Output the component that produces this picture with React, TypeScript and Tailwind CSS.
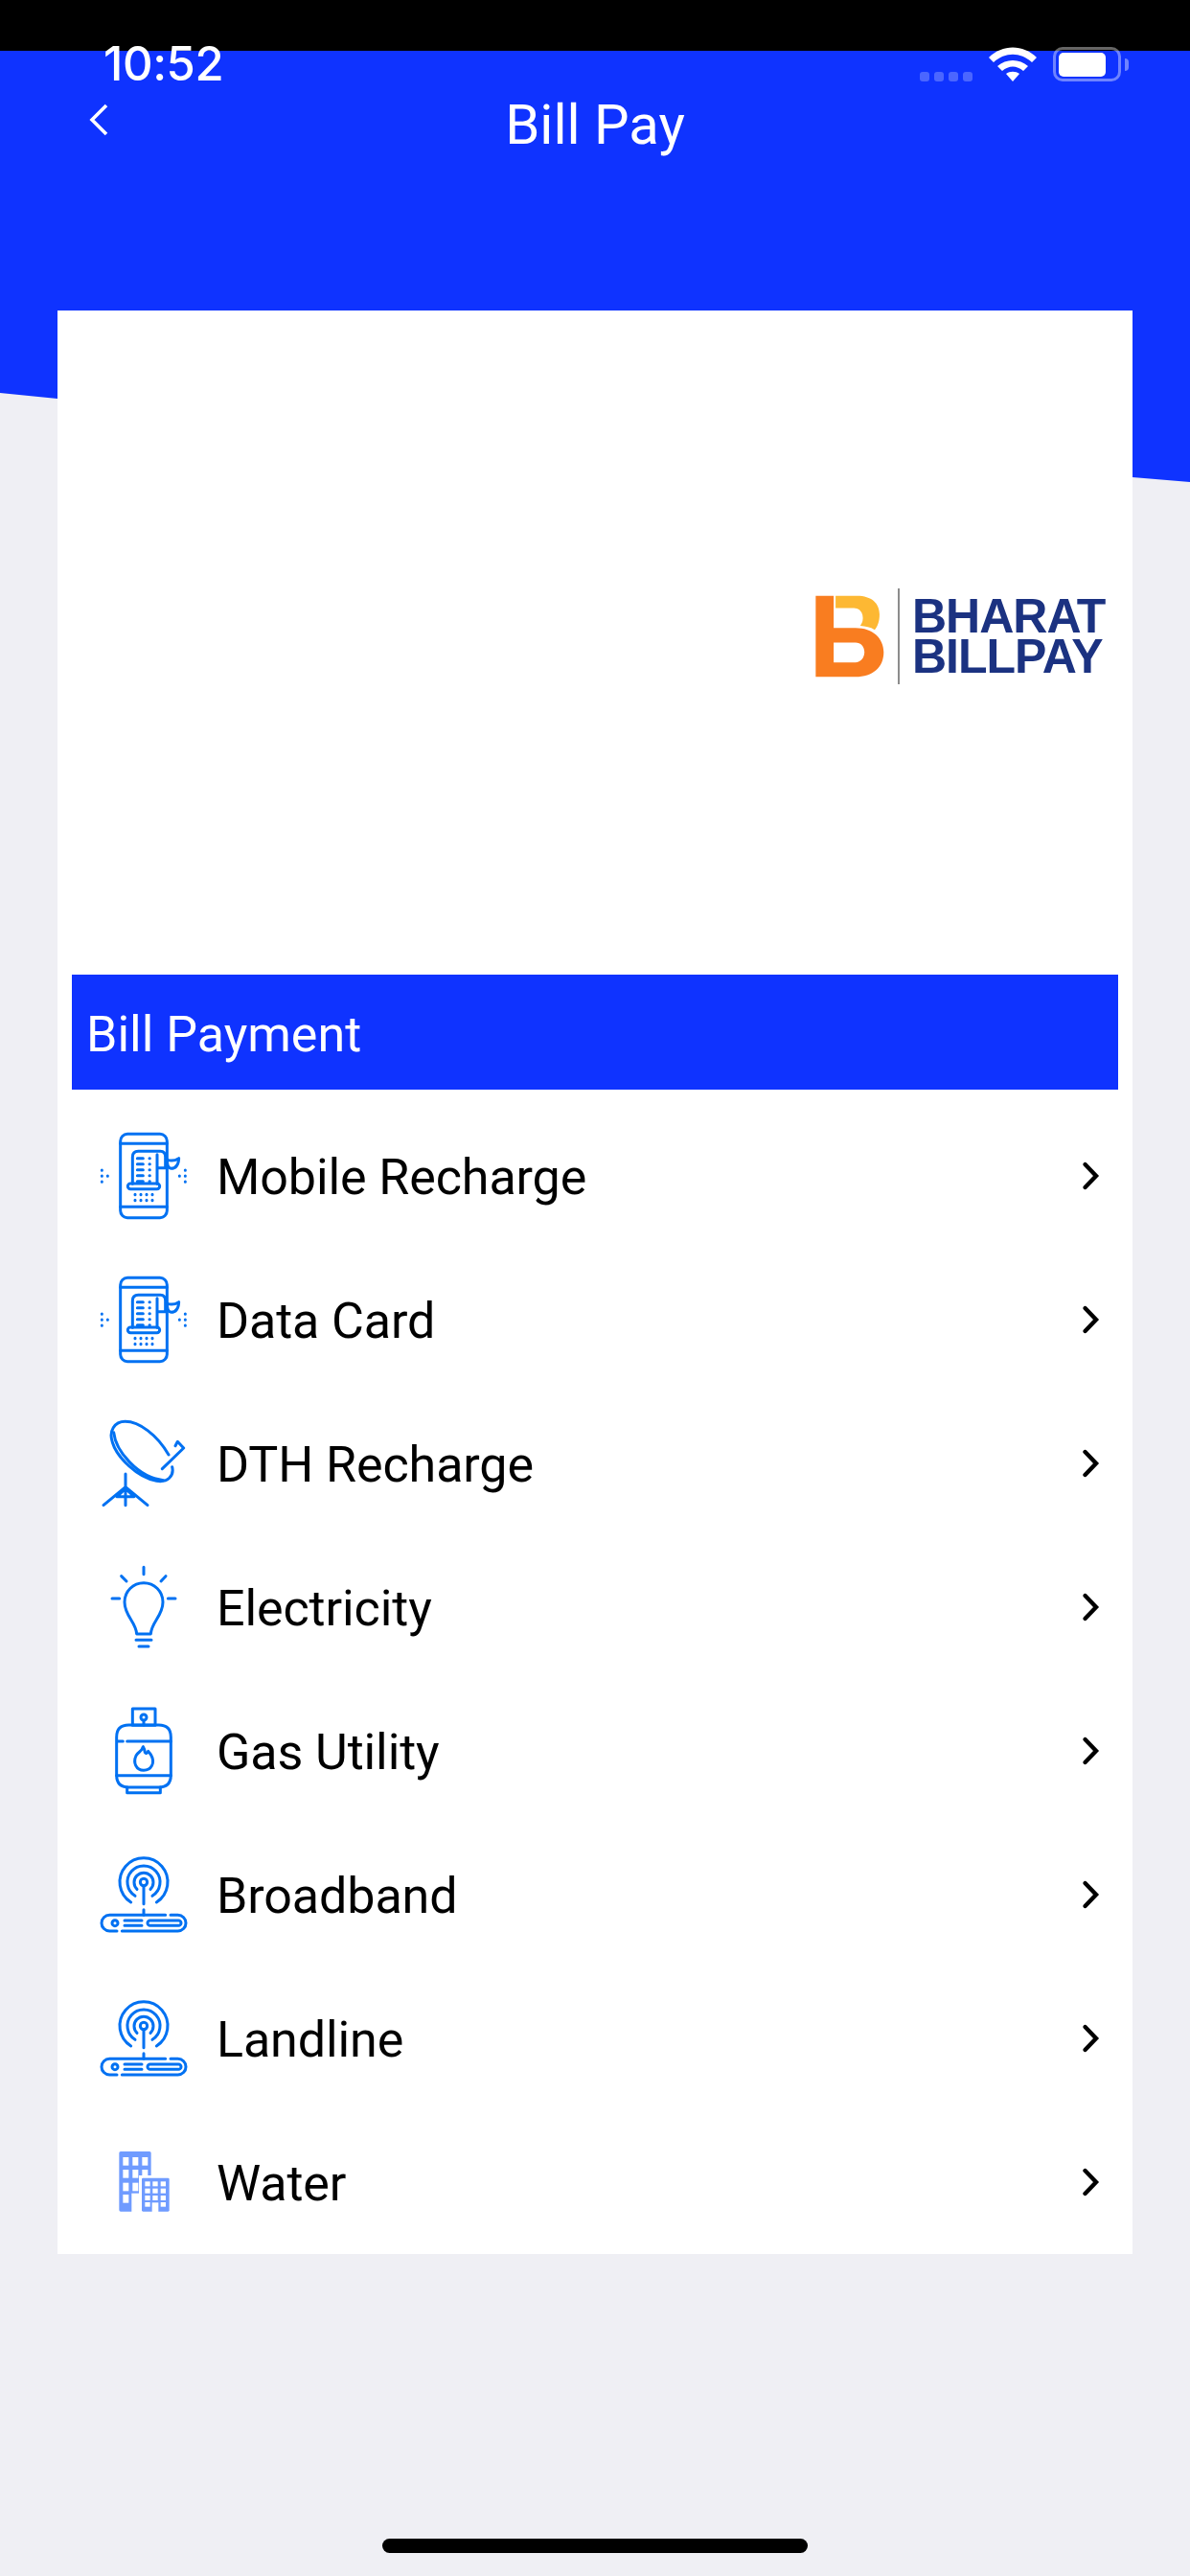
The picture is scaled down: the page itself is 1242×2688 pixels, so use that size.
const BLUE = "#0071f2";

function Chevron() {
  return (
    <svg width="24" height="32" viewBox="0 0 24 32" fill="none" stroke="#000" strokeWidth="4.4" strokeLinecap="round" strokeLinejoin="miter">
      <path d="M4.5 4 L16 16 L4.5 28" />
    </svg>
  );
}

function IconFrame({ box, children }: { box: string; children: React.ReactNode }) {
  return (
    <svg width="96" height="96" viewBox={box} fill="none" stroke={BLUE} strokeWidth="9" strokeLinecap="round" strokeLinejoin="round">
      {children}
    </svg>
  );
}

function PhoneIcon() {
  const lines = [146, 164, 182, 200, 218];
  const keyX = [183, 201, 219, 237];
  return (
    <IconFrame box="66 57 288 288">
      <rect x="137" y="70" width="146" height="262" rx="22" />
      <path d="M137 100 H283 M137 298 H283" />
      <path d="M175 226 V142 Q175 124 193 124 H262 Q278 124 278 142 V176 H252 M252 134 V226" />
      <path d="M283 150 Q300 158 320 146 Q318 178 296 178 Q283 176 283 150" />
      <rect x="160" y="225" width="100" height="17" rx="8.5" />
      {lines.map((y) => (
        <path key={y} d={`M190 ${y} H208 M228 ${y} H229`} />
      ))}
      {keyX.map((x) => (
        <path key={x} d={`M${x} 259 V260 M${x} 277 V278`} />
      ))}
      <path d="M79 183 V184 M79 201 V202 M79 219 V220 M97 201 V202 M340 183 V184 M340 201 V202 M340 219 V220 M322 201 V202" />
    </IconFrame>
  );
}

function DishIcon() {
  return (
    <IconFrame box="66 87 288 288">
      <path d="M288 204 C252 142 196 100 152 100 C118 100 100 130 112 165 C126 212 190 275 250 286 C285 292 306 270 299 242" />
      <path d="M116 134 C122 192 192 276 272 284" />
      <path d="M268 248 L335 183 L316 163 L309 176" />
      <path d="M153 264 V362 M84 362 L153 305 L222 362 M126 335 L153 310 L180 335 Z" />
    </IconFrame>
  );
}

function BulbIcon() {
  return (
    <IconFrame box="66 537 288 288">
      <path d="M210 556 V578 M140 584 L156 600 M279 584 L264 600 M111 654 H134 M286 654 H309" />
      <path d="M188 765 C186 728 150 708 150 665 A60 60 0 0 1 270 665 C270 708 234 728 232 765 Z" />
      <path d="M186 784 H234 M195 804 H225" />
    </IconFrame>
  );
}

function GasIcon() {
  return (
    <IconFrame box="66 87 288 288">
      <rect x="175" y="99" width="71" height="52" />
      <circle cx="210" cy="126" r="9" />
      <path d="M210 135 V150" />
      <path d="M145 201 H125 V188 Q125 150 163 150 H257 Q295 150 295 188 V307 Q295 345 257 345 H163 Q125 345 125 307 V188" />
      <path d="M158 201 H295 M125 308 H295" />
      <path d="M158 345 V362 H262 V345" />
      <path d="M208 218 C204 234 194 232 186 246 C176 268 186 292 210 292 C234 292 246 268 234 246 C230 238 226 236 224 232 C220 240 216 240 214 236 C213 230 212 224 208 218 Z" />
    </IconFrame>
  );
}

function RouterIcon() {
  return (
    <IconFrame box="66 537 288 288">
      <circle cx="210" cy="642" r="11" />
      <path d="M189 664 A30 30 0 1 1 231 664" />
      <path d="M183 685 A51 51 0 1 1 237 685" />
      <path d="M170 705 A75 75 0 1 1 250 705" />
      <path d="M210 654 V710 M210 728 V745" />
      <path d="M278 745 H103 A25 25 0 0 0 103 795 H126 M142 795 H317 A25 25 0 0 0 317 745 H294" />
      <circle cx="120" cy="770" r="9" />
      <path d="M150 762 H204 M150 778 H204" />
      <rect x="222" y="762" width="105" height="16" rx="8" />
    </IconFrame>
  );
}

function BuildingIcon() {
  const bigWindows = [
    [145, 603], [175, 603], [205, 603],
    [145, 642], [175, 642], [205, 642],
    [145, 683], [175, 683],
    [145, 720],
  ];
  const smallX = [214, 238, 263];
  const smallY = [679, 701, 723];
  return (
    <svg width="96" height="96" viewBox="66 537 288 288">
      <rect x="133" y="585" width="100" height="188" rx="5" fill="#6f9bff" />
      {bigWindows.map(([x, y]) => (
        <rect key={`${x}-${y}`} x={x} y={y} width="18" height="26" fill="#fff" />
      ))}
      <rect x="172" y="716" width="32" height="58" fill="#fff" />
      <rect x="195" y="660" width="102" height="116" fill="#fff" />
      <rect x="204" y="668" width="86" height="105" rx="4" fill="#6f9bff" />
      {smallX.map((x) =>
        smallY.map((y) => <rect key={`${x}-${y}`} x={x} y={y} width="16" height="15" fill="#fff" />)
      )}
      <rect x="214" y="744" width="16" height="14" fill="#fff" />
      <rect x="263" y="744" width="16" height="14" fill="#fff" />
      <rect x="236" y="745" width="20" height="30" fill="#fff" />
    </svg>
  );
}

const rows = [
  { label: "Mobile Recharge", Icon: PhoneIcon },
  { label: "Data Card", Icon: PhoneIcon },
  { label: "DTH Recharge", Icon: DishIcon },
  { label: "Electricity", Icon: BulbIcon },
  { label: "Gas Utility", Icon: GasIcon },
  { label: "Broadband", Icon: RouterIcon },
  { label: "Landline", Icon: RouterIcon },
  { label: "Water", Icon: BuildingIcon },
];

function BharatLogo() {
  return (
    <div className="flex items-center">
      <svg width="72" height="86" viewBox="66 90 213 257" className="shrink-0">
        <path d="M128 92 H195 C240 92 265 115 265 150 C265 172 259 188 250 198 C236 190 222 187 205 186 Q216 170 212 152 Q206 130 185 130 H128 Z" fill="#fdb833" />
        <path fillRule="evenodd" d="M66 92 H122 V192 H190 C245 192 278 225 278 268 C278 315 245 345 190 345 H66 Z M122 238 V300 H190 C206 300 218 285 218 268 C218 250 206 238 190 238 Z" fill="#f97d20" />
      </svg>
      <div className="mr-[13px] ml-[14px] h-[100px] w-[2px] bg-[#8c8c8c]" />
      <div className="flex w-[204px] flex-col font-['Liberation_Sans',sans-serif] text-[50px] leading-[42px] font-bold tracking-[-1px] text-[#1b3281]">
        <span>BHARAT</span>
        <span>BILLPAY</span>
      </div>
    </div>
  );
}

export default function App() {
  return (
    <div className="relative h-[2688px] w-[1242px] overflow-hidden bg-[#efeff4] font-['Roboto',sans-serif]">
      <svg className="absolute top-0 left-0" width="1242" height="510" viewBox="0 0 1242 510">
        <path d="M0 0 H1242 V503 L1182 498 L60 416 L0 410 Z" fill="#0f33ff" />
      </svg>

      <div className="relative flex h-[53px] bg-black" />

      <div className="absolute top-[38px] left-[108px] font-['Inter',sans-serif] text-[49px] leading-[58px] font-medium tracking-[-0.4px] text-white">10:52</div>
      <div className="absolute top-[49px] left-[960px] flex items-start">
        <div className="mt-[26px] flex gap-[5px]">
          <span className="h-[10px] w-[10px] rounded-[3px] bg-white/25" />
          <span className="h-[10px] w-[10px] rounded-[3px] bg-white/25" />
          <span className="h-[10px] w-[10px] rounded-[3px] bg-white/25" />
          <span className="h-[10px] w-[10px] rounded-[3px] bg-white/25" />
        </div>
        <svg className="ml-[17px]" width="50" height="36" viewBox="0 0 50 36" fill="#fff">
          <path d="M0 11 C14 -3 36 -3 50 11 L45 16 C33 5 17 5 5 16 Z" />
          <path d="M9 20 C18 12 32 12 41 20 L36 25 C29 19 21 19 14 25 Z" />
          <path d="M18 28 C22 25 28 25 32 28 L25 36 Z" />
        </svg>
        <div className="ml-[17px] flex h-[36px] w-[71px] items-center rounded-[10px] border-[3px] border-white/40 pl-[3px]">
          <div className="h-[25px] w-[49px] rounded-[5px] bg-white" />
        </div>
        <div className="mt-[12px] ml-[4px] h-[13px] w-[4px] rounded-r-[4px] bg-white/40" />
      </div>

      <div className="relative flex h-[271px] items-start justify-center">
        <svg className="absolute top-[55px] left-[93px]" width="20" height="34" viewBox="0 0 20 34" fill="none" stroke="#fff" strokeWidth="3.6" strokeLinecap="butt" strokeLinejoin="miter">
          <path d="M18 2 L3 17 L18 32" />
        </svg>
        <h1 className="mt-[44px] text-[58px] leading-[66px] font-normal text-white">Bill Pay</h1>
      </div>

      <div className="relative mx-[60px] h-[2028px] bg-white">
        <div className="flex h-[693px] items-center justify-end pr-[26px] pb-[14px]">
          <BharatLogo />
        </div>
        <div className="mx-[15px] flex h-[120px] items-center bg-[#0f33ff] pt-[6px] pl-[15px] text-[52px] text-white">Bill Payment</div>
        <ul className="pt-[15px]">
          {rows.map(({ label, Icon }) => (
            <li key={label} className="flex h-[150px] items-center pr-[30px] pl-[42px]">
              <Icon />
              <span className="mt-[3px] ml-[28px] flex-1 text-[52px] leading-[60px] tracking-[-0.1px] text-black">{label}</span>
              <Chevron />
            </li>
          ))}
        </ul>
      </div>

      <div className="absolute top-[2649px] left-[399px] h-[15px] w-[444px] rounded-full bg-black" />
    </div>
  );
}
